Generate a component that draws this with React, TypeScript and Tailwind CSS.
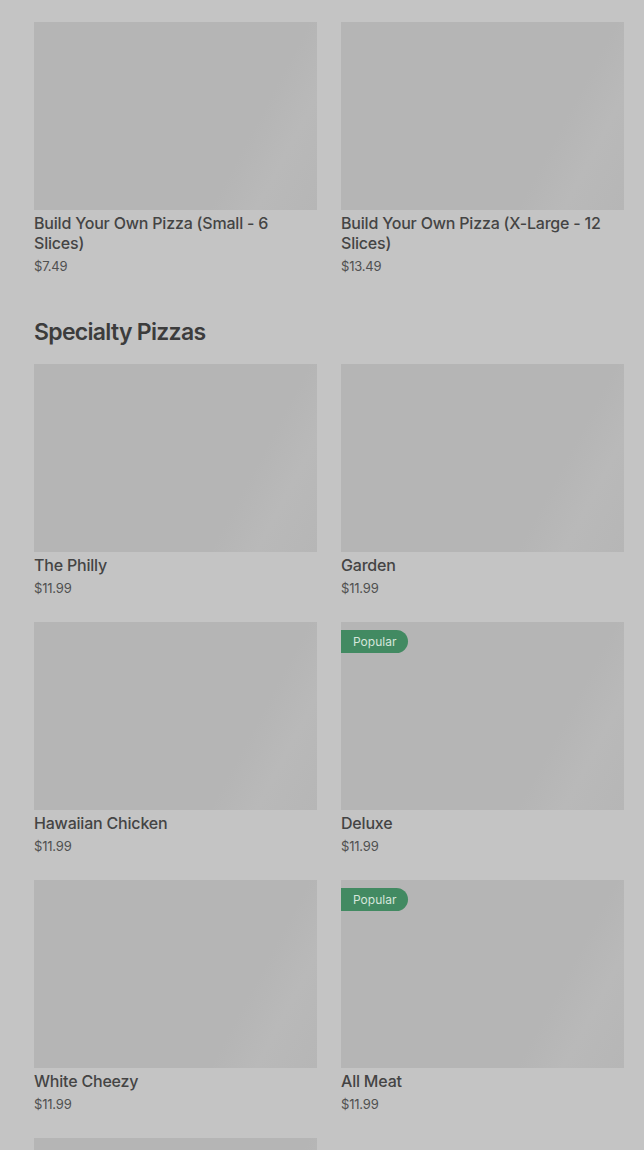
const font = { fontFamily: "Inter, 'Liberation Sans', sans-serif" };

type Item = { name: string; price: string; popular?: boolean };

const buildYourOwn: Item[] = [
  { name: "Build Your Own Pizza (Small - 6 Slices)", price: "$7.49" },
  { name: "Build Your Own Pizza (X-Large - 12 Slices)", price: "$13.49" },
];

const specialty: Item[] = [
  { name: "The Philly", price: "$11.99" },
  { name: "Garden", price: "$11.99" },
  { name: "Hawaiian Chicken", price: "$11.99" },
  { name: "Deluxe", price: "$11.99", popular: true },
  { name: "White Cheezy", price: "$11.99" },
  { name: "All Meat", price: "$11.99", popular: true },
  { name: "", price: "" },
];

const ItemCard = ({ item }: { item: Item }) => (
  <div className="flex flex-col">
    <div className="relative h-[188px] bg-[linear-gradient(118deg,#b5b5b5_72%,#b9b9b9_84%,#b6b6b6_100%)]">
      {item.popular && (
        <span className="absolute left-0 top-2 h-[23px] pl-3 pr-3 flex items-center rounded-r-full bg-[#428a62] text-[12px] text-[#d6e6dc]">
          Popular
        </span>
      )}
    </div>
    {item.name && (
      <>
        <div className="mt-[3px] text-[16px] leading-5 font-medium tracking-[-0.2px] text-[#444444]">{item.name}</div>
        <div className="mt-1 text-[13px] leading-[18px] tracking-[-0.2px] text-[#505050]">{item.price}</div>
      </>
    )}
  </div>
);

const App = () => {
  return (
    <div className="min-h-[1150px] bg-[#c4c4c4] pl-[34px] pr-[20px] pt-[22px]" style={font}>
      <div className="grid grid-cols-2 gap-x-6 gap-y-[25px]">
        {buildYourOwn.map((item) => (
          <ItemCard key={item.name} item={item} />
        ))}
      </div>

      {/* SPECIALTY */}
      <h2 className="mt-[41px] mb-4 text-[23px] leading-8 font-semibold tracking-[-0.7px] text-[#3c3c3c]">Specialty Pizzas</h2>
      <div className="grid grid-cols-2 gap-x-6 gap-y-[25px]">
        {specialty.map((item, i) => (
          <ItemCard key={i} item={item} />
        ))}
      </div>
    </div>
  );
};

export default App;
